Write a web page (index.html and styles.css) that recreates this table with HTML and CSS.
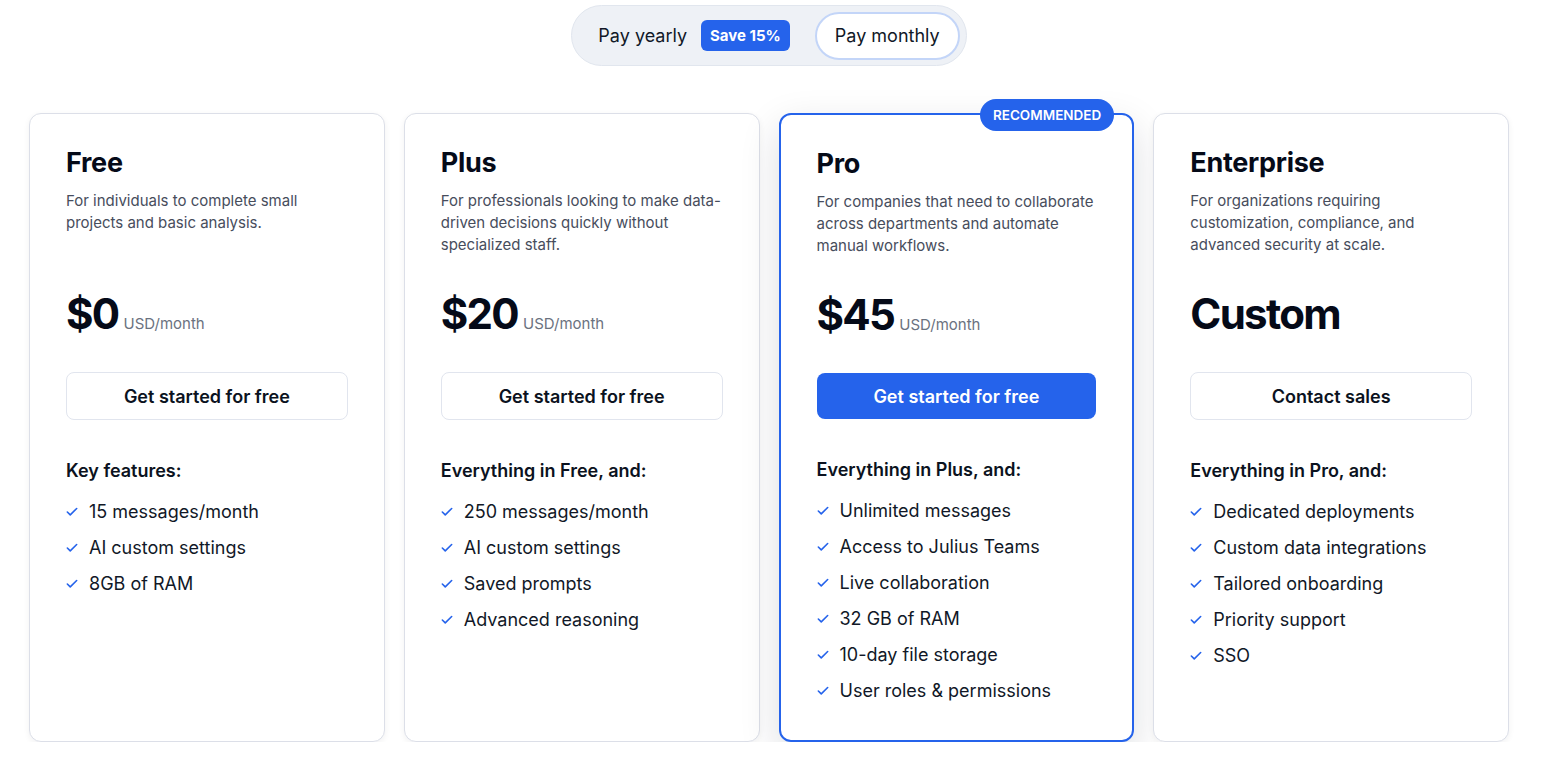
FILE: index.html
```html
<!DOCTYPE html>
<html lang="en">
<head>
<meta charset="utf-8">
<title>Pricing</title>
<link rel="stylesheet" href="styles.css">
</head>
<body>
<div class="page">
  <div class="toggle-wrap">
    <div class="toggle">
      <button class="seg seg-yearly">Pay yearly <span class="save">Save 15%</span></button>
      <button class="seg seg-active">Pay monthly</button>
    </div>
  </div>

  <div class="plans">
    <div class="card">
      <h2 class="title">Free</h2>
      <p class="desc">For individuals to complete small projects and basic analysis.</p>
      <div class="price"><span class="amount">$0</span><span class="unit">USD/month</span></div>
      <button class="cta">Get started for free</button>
      <h3 class="feat-head">Key features:</h3>
      <ul class="feats">
        <li><svg class="chk" viewBox="0 0 24 24"><path d="M20 6 9 17l-5-5"/></svg>15 messages/month</li>
        <li><svg class="chk" viewBox="0 0 24 24"><path d="M20 6 9 17l-5-5"/></svg>AI custom settings</li>
        <li><svg class="chk" viewBox="0 0 24 24"><path d="M20 6 9 17l-5-5"/></svg>8GB of RAM</li>
      </ul>
    </div>

    <div class="card">
      <h2 class="title">Plus</h2>
      <p class="desc">For professionals looking to make data-driven decisions quickly without specialized staff.</p>
      <div class="price"><span class="amount">$20</span><span class="unit">USD/month</span></div>
      <button class="cta">Get started for free</button>
      <h3 class="feat-head">Everything in Free, and:</h3>
      <ul class="feats">
        <li><svg class="chk" viewBox="0 0 24 24"><path d="M20 6 9 17l-5-5"/></svg>250 messages/month</li>
        <li><svg class="chk" viewBox="0 0 24 24"><path d="M20 6 9 17l-5-5"/></svg>AI custom settings</li>
        <li><svg class="chk" viewBox="0 0 24 24"><path d="M20 6 9 17l-5-5"/></svg>Saved prompts</li>
        <li><svg class="chk" viewBox="0 0 24 24"><path d="M20 6 9 17l-5-5"/></svg>Advanced reasoning</li>
      </ul>
    </div>

    <div class="card card-pro">
      <span class="badge">RECOMMENDED</span>
      <h2 class="title">Pro</h2>
      <p class="desc">For companies that need to collaborate across departments and automate manual workflows.</p>
      <div class="price"><span class="amount">$45</span><span class="unit">USD/month</span></div>
      <button class="cta cta-primary">Get started for free</button>
      <h3 class="feat-head">Everything in Plus, and:</h3>
      <ul class="feats">
        <li><svg class="chk" viewBox="0 0 24 24"><path d="M20 6 9 17l-5-5"/></svg>Unlimited messages</li>
        <li><svg class="chk" viewBox="0 0 24 24"><path d="M20 6 9 17l-5-5"/></svg>Access to Julius Teams</li>
        <li><svg class="chk" viewBox="0 0 24 24"><path d="M20 6 9 17l-5-5"/></svg>Live collaboration</li>
        <li><svg class="chk" viewBox="0 0 24 24"><path d="M20 6 9 17l-5-5"/></svg>32 GB of RAM</li>
        <li><svg class="chk" viewBox="0 0 24 24"><path d="M20 6 9 17l-5-5"/></svg>10-day file storage</li>
        <li><svg class="chk" viewBox="0 0 24 24"><path d="M20 6 9 17l-5-5"/></svg>User roles &amp; permissions</li>
      </ul>
    </div>

    <div class="card">
      <h2 class="title">Enterprise</h2>
      <p class="desc">For organizations requiring customization, compliance, and advanced security at scale.</p>
      <div class="price"><span class="amount">Custom</span></div>
      <button class="cta">Contact sales</button>
      <h3 class="feat-head">Everything in Pro, and:</h3>
      <ul class="feats">
        <li><svg class="chk" viewBox="0 0 24 24"><path d="M20 6 9 17l-5-5"/></svg>Dedicated deployments</li>
        <li><svg class="chk" viewBox="0 0 24 24"><path d="M20 6 9 17l-5-5"/></svg>Custom data integrations</li>
        <li><svg class="chk" viewBox="0 0 24 24"><path d="M20 6 9 17l-5-5"/></svg>Tailored onboarding</li>
        <li><svg class="chk" viewBox="0 0 24 24"><path d="M20 6 9 17l-5-5"/></svg>Priority support</li>
        <li><svg class="chk" viewBox="0 0 24 24"><path d="M20 6 9 17l-5-5"/></svg>SSO</li>
      </ul>
    </div>
  </div>
</div>
</body>
</html>
```

FILE: styles.css
```css
* { box-sizing: border-box; }
html, body { margin: 0; padding: 0; background: #ffffff; }
body {
  font-family: Inter, "Noto Sans", sans-serif;
  color: #0b1220;
  -webkit-font-smoothing: antialiased;
}
.page {
  width: 1480px;
  margin-left: 29px;
  padding-top: 5px;
}
.toggle-wrap {
  display: flex;
  justify-content: center;
}
.toggle {
  display: flex;
  align-items: center;
  height: 61px;
  padding: 0 6px 0 5px;
  background: #eef1f6;
  border: 1px solid #e1e6ee;
  border-radius: 31px;
}
.seg {
  font-family: inherit;
  font-size: 18px;
  color: #111827;
  background: transparent;
  border: 0;
  display: flex;
  align-items: center;
  height: 48px;
  padding: 0 20px 0 21px;
  cursor: pointer;
}
.save {
  margin-left: 14px;
  background: #2563eb;
  color: #fff;
  font-weight: 700;
  font-size: 15px;
  height: 31px;
  line-height: 31px;
  padding: 0 9px;
  border-radius: 6px;
}
.seg-active {
  margin-left: 5px;
  background: #fff;
  border: 2px solid #c3d5f8;
  border-radius: 24px;
  padding: 0 18px;
}
.plans {
  margin-top: 47px;
  display: grid;
  grid-template-columns: repeat(4, 1fr);
  column-gap: 19px;
  align-items: stretch;
}
.card {
  position: relative;
  background: #fff;
  border: 1px solid #dcdfe8;
  border-radius: 12px;
  padding: 31px 36px 36px;
  box-shadow: 0 2px 6px rgba(15, 23, 42, 0.06);
  display: flex;
  flex-direction: column;
  height: 629px;
}
.card-pro {
  border: 2px solid #2563eb;
  box-shadow: 0 14px 40px rgba(15, 23, 42, 0.14);
}
.badge {
  position: absolute;
  top: -16px;
  right: 18px;
  background: #2563eb;
  color: #fff;
  font-size: 13.5px;
  font-weight: 600;
  height: 32px;
  line-height: 32px;
  padding: 0 13px;
  border-radius: 16px;
}
.title {
  margin: 0;
  font-size: 27px;
  line-height: 36px;
  font-weight: 700;
  color: #050a18;
  letter-spacing: -0.01em;
}
.desc {
  margin: 9px 0 0;
  font-size: 15px;
  line-height: 22px;
  color: #474d5c;
  min-height: 66px;
}
.price {
  margin-top: 34px;
  height: 48px;
  display: flex;
  align-items: baseline;
}
.amount {
  font-size: 42px;
  line-height: 48px;
  font-weight: 700;
  color: #050a18;
  letter-spacing: -0.04em;
}
.unit {
  margin-left: 5px;
  font-size: 15px;
  color: #6b7280;
}
.cta {
  margin-top: 34px;
  height: 48px;
  width: 100%;
  font-family: inherit;
  font-size: 18px;
  font-weight: 600;
  color: #0b1220;
  background: #fff;
  border: 1px solid #e1e5ee;
  border-radius: 8px;
  cursor: pointer;
}
.cta-primary {
  height: 46px;
  background: #2563eb;
  border: 0;
  color: #fff;
}
.feat-head {
  margin: 39px 0 0;
  font-size: 18px;
  line-height: 24px;
  font-weight: 600;
  color: #0b1220;
}
.feats {
  list-style: none;
  margin: 17px 0 0;
  padding: 0;
  display: flex;
  flex-direction: column;
  gap: 12px;
}
.feats li {
  display: flex;
  align-items: center;
  font-size: 18px;
  line-height: 24px;
  color: #111827;
}
.chk {
  width: 14px;
  height: 14px;
  margin-right: 10px;
  margin-left: -1px;
  fill: none;
  stroke: #2563eb;
  stroke-width: 2.75;
  stroke-linecap: round;
  stroke-linejoin: round;
}
```
